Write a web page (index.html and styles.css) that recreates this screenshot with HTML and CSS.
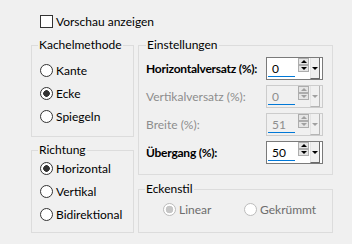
FILE: index.html
```html
<!DOCTYPE html>
<html lang="de">
<head>
    <meta charset="UTF-8">
    <meta name="viewport" content="width=device-width, initial-scale=1.0">
    <title>Kacheleffekt</title>
    <link rel="stylesheet" href="styles.css">
</head>
<body>
    <div class="dialog">
        <label class="check-row">
            <input type="checkbox" class="check">
            <span>Vorschau anzeigen</span>
        </label>

        <div class="columns">
            <div class="col-left">
                <fieldset class="group group-tiling">
                    <legend>Kachelmethode</legend>
                    <label class="radio-row"><input type="radio" name="tile"><span>Kante</span></label>
                    <label class="radio-row"><input type="radio" name="tile" checked><span>Ecke</span></label>
                    <label class="radio-row"><input type="radio" name="tile"><span>Spiegeln</span></label>
                </fieldset>

                <fieldset class="group group-direction">
                    <legend>Richtung</legend>
                    <label class="radio-row"><input type="radio" name="dir" checked><span>Horizontal</span></label>
                    <label class="radio-row"><input type="radio" name="dir"><span>Vertikal</span></label>
                    <label class="radio-row"><input type="radio" name="dir"><span>Bidirektional</span></label>
                </fieldset>
            </div>

            <div class="col-right">
                <fieldset class="group group-settings">
                    <legend>Einstellungen</legend>

                    <div class="setting-row">
                        <span class="setting-label strong">Horizontalversatz (%):</span>
                        <div class="spin">
                            <div class="field"><span class="value">0</span><span class="bar"></span></div>
                            <div class="arrows"><span class="arrow up"></span><span class="arrow down"></span></div>
                            <span class="drop"></span>
                        </div>
                    </div>

                    <div class="setting-row disabled">
                        <span class="setting-label">Vertikalversatz (%):</span>
                        <div class="spin">
                            <div class="field"><span class="value">0</span><span class="bar"></span></div>
                            <div class="arrows"><span class="arrow up"></span><span class="arrow down"></span></div>
                            <span class="drop"></span>
                        </div>
                    </div>

                    <div class="setting-row disabled">
                        <span class="setting-label">Breite (%):</span>
                        <div class="spin">
                            <div class="field"><span class="value">51</span><span class="bar"></span></div>
                            <div class="arrows"><span class="arrow up"></span><span class="arrow down"></span></div>
                            <span class="drop"></span>
                        </div>
                    </div>

                    <div class="setting-row">
                        <span class="setting-label strong">Übergang (%):</span>
                        <div class="spin">
                            <div class="field"><span class="value">50</span><span class="bar"></span></div>
                            <div class="arrows"><span class="arrow up"></span><span class="arrow down"></span></div>
                            <span class="drop"></span>
                        </div>
                    </div>
                </fieldset>

                <fieldset class="group group-corner">
                    <legend>Eckenstil</legend>
                    <div class="corner-options">
                        <label class="radio-row disabled linear"><input type="radio" name="corner" checked disabled><span>Linear</span></label>
                        <label class="radio-row disabled"><input type="radio" name="corner" disabled><span>Gekrümmt</span></label>
                    </div>
                </fieldset>
            </div>
        </div>
    </div>
</body>
</html>
```

FILE: styles.css
```css
/* Basic reset */
* {
    margin: 0;
    padding: 0;
    box-sizing: border-box;
    font-family: Lato, "Noto Sans", sans-serif;
}

body {
    background-color: #f0f0f0;
    color: #000;
    font-size: 12px;
    line-height: 14px;
}

.dialog {
    width: 352px;
    height: 244px;
    padding: 15px 0 0 31px;
}

/* Preview checkbox */
.check-row {
    display: flex;
    align-items: center;
    gap: 3px;
    height: 13px;
    margin-left: 9px;
}

.check {
    appearance: none;
    width: 13px;
    height: 13px;
    border: 1px solid #333;
    background: #fff;
}

.columns {
    display: flex;
    gap: 4px;
    margin-top: 10px;
}

.col-left {
    width: 103px;
    display: flex;
    flex-direction: column;
    gap: 6px;
}

.col-right {
    width: 195px;
    display: flex;
    flex-direction: column;
    gap: 7px;
}

/* Group boxes */
.group {
    border: 1px solid #dcdcdc;
    padding: 0 0 0 6px;
}

.group legend {
    padding: 0 1px;
    line-height: 14px;
}

.group-tiling {
    height: 99px;
    padding-top: 7px;
}

.group-direction {
    height: 90px;
}

.group-tiling .radio-row,
.group-direction .radio-row {
    margin-left: 2px;
}

.group-settings {
    height: 137px;
    padding: 5px 9px 0 7px;
}

.group-corner {
    height: 51px;
    padding-top: 2px;
}

/* Radio buttons */
.radio-row {
    display: flex;
    align-items: center;
    gap: 3px;
    height: 23px;
}

.radio-row input {
    appearance: none;
    width: 13px;
    height: 13px;
    border: 1px solid #333;
    border-radius: 50%;
    background: #fff;
    flex-shrink: 0;
}

.radio-row input:checked {
    background: radial-gradient(circle, #333 0 3px, #fff 3.6px);
}

.radio-row.disabled {
    color: #6d6d6d;
}

.radio-row input:disabled {
    border-color: #bcbcbc;
}

.radio-row input:disabled:checked {
    background: radial-gradient(circle, #c6c6c6 0 3.5px, #fff 4.1px);
}

.corner-options {
    display: flex;
    padding-left: 18px;
}

.corner-options .linear {
    width: 81px;
}

/* Number fields */
.setting-row {
    display: flex;
    align-items: center;
    justify-content: space-between;
    height: 23px;
    margin-bottom: 5px;
}

.setting-label {
    white-space: nowrap;
}

.setting-label.strong {
    font-weight: bold;
    letter-spacing: -0.25px;
}

.setting-row.disabled .setting-label {
    color: #8d8d8d;
}

.spin {
    display: flex;
    flex-shrink: 0;
    width: 57px;
    height: 23px;
    border: 1px solid #7a7a7a;
    background: #fff;
}

.field {
    width: 31px;
    display: flex;
    flex-direction: column;
    padding: 3px 0 2px 1px;
}

.value {
    flex: 1;
    padding-left: 4px;
    line-height: 15px;
}

.bar {
    width: 27px;
    height: 3px;
    background: #0078d7;
}

.arrows {
    width: 11px;
    display: flex;
    flex-direction: column;
}

.arrow {
    height: 7px;
    border: 1px solid #adadad;
    background: #e5e5e5;
    display: flex;
    align-items: center;
    justify-content: center;
}

.arrow::after {
    content: "";
    border-left: 3px solid transparent;
    border-right: 3px solid transparent;
}

.arrow.up::after {
    border-bottom: 3px solid #000;
}

.arrow.down::after {
    border-top: 3px solid #000;
}

.drop {
    width: 10px;
    margin-left: 1px;
    border-left: 1px solid #e3e3e3;
    border-right: 1px solid #696969;
    border-bottom: 1px solid #696969;
    background: #f0f0f0;
    display: flex;
    align-items: center;
    justify-content: center;
}

.drop::after {
    content: "";
    border-left: 3px solid transparent;
    border-right: 3px solid transparent;
    border-top: 3px solid #000;
}

.setting-row.disabled .spin {
    border-color: #cccccc;
    background: #f0f0f0;
}

.setting-row.disabled .value {
    color: #8d8d8d;
}

.setting-row.disabled .arrow.up::after {
    border-bottom-color: #a0a0a0;
}

.setting-row.disabled .arrow.down::after,
.setting-row.disabled .drop::after {
    border-top-color: #a0a0a0;
}

.setting-row.disabled .drop {
    border-right-color: #b5b5b5;
    border-bottom-color: #b5b5b5;
}
```
